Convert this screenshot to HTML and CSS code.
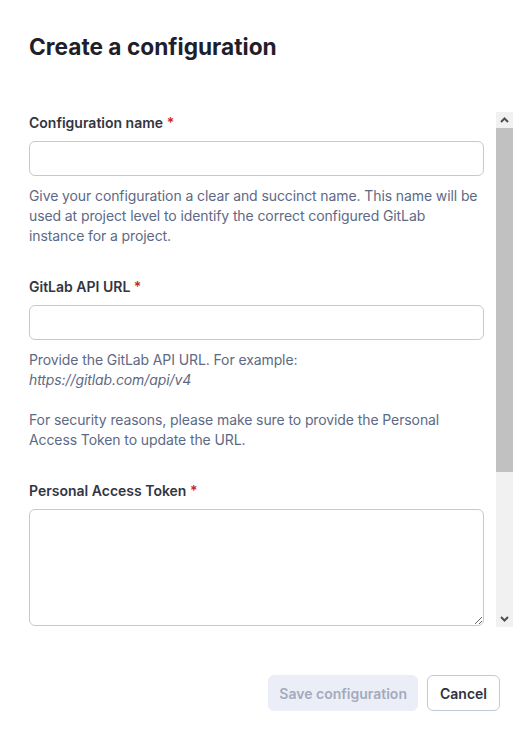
FILE: index.html
```html
<!DOCTYPE html>
<html lang="en">
<head>
<meta charset="utf-8">
<title>Create a configuration</title>
<link rel="stylesheet" href="styles.css">
</head>
<body>
<div class="modal">
  <header class="modal-header">
    <h2 class="modal-title">Create a configuration</h2>
  </header>
  <div class="body-wrap">
    <div class="modal-body">
      <div class="field">
        <label class="label" for="name">Configuration name <span class="req">*</span></label>
        <input class="input" id="name" type="text">
        <p class="help">Give your configuration a clear and succinct name. This name will be used at project level to identify the correct configured GitLab instance for a project.</p>
      </div>
      <div class="field">
        <label class="label" for="url">GitLab API URL <span class="req">*</span></label>
        <input class="input" id="url" type="text">
        <p class="help">Provide the GitLab API URL. For example:<br><em>https://gitlab.com/api/v4</em></p>
        <p class="help help-gap">For security reasons, please make sure to provide the Personal Access Token to update the URL.</p>
      </div>
      <div class="field">
        <label class="label" for="token">Personal Access Token <span class="req">*</span></label>
        <textarea class="textarea" id="token"></textarea>
      </div>
    </div>
    <div class="scrollbar" aria-hidden="true">
      <div class="sb-btn">
        <svg width="9" height="6" viewBox="0 0 9 6"><polyline points="1,5 4.5,1.5 8,5" fill="none" stroke="#505050" stroke-width="2"/></svg>
      </div>
      <div class="sb-thumb"></div>
      <div class="sb-track"></div>
      <div class="sb-btn">
        <svg width="9" height="6" viewBox="0 0 9 6"><polyline points="1,1 4.5,4.5 8,1" fill="none" stroke="#505050" stroke-width="2"/></svg>
      </div>
    </div>
  </div>
  <footer class="modal-footer">
    <button class="btn btn-save" type="button" disabled>Save configuration</button>
    <button class="btn btn-cancel" type="button">Cancel</button>
  </footer>
</div>
</body>
</html>
```

FILE: styles.css
```css
html, body {
  margin: 0;
  padding: 0;
  background: #ffffff;
}

body {
  font-family: Inter, "Noto Sans", "Liberation Sans", sans-serif;
  color: #2f3140;
}

.modal {
  padding: 0 16px 0 13px;
}

.modal-header {
  padding: 33px 16px 0;
  height: 112px;
  box-sizing: border-box;
}

.modal-title {
  margin: 0;
  font-size: 22.7px;
  line-height: 28px;
  font-weight: 700;
  color: #1f1f2b;
}

.body-wrap {
  position: relative;
  height: 515px;
}

.modal-body {
  height: 100%;
  overflow: hidden;
  padding: 1px 29px 0 16px;
  box-sizing: border-box;
}

.scrollbar {
  position: absolute;
  top: 0;
  right: 0;
  bottom: 0;
  width: 17px;
  background: #f1f1f1;
  display: flex;
  flex-direction: column;
}

.sb-btn {
  height: 16px;
  display: flex;
  align-items: center;
  justify-content: center;
}

.sb-thumb {
  height: 344px;
  background: #c1c1c1;
}

.sb-track {
  flex: 1;
}

.field {
  display: flex;
  flex-direction: column;
  margin-bottom: 31px;
}

.label {
  font-size: 14px;
  line-height: 20px;
  font-weight: 600;
  color: #333542;
  margin-bottom: 8px;
}

.req {
  color: #c9281c;
}

.input,
.textarea {
  display: block;
  width: 100%;
  box-sizing: border-box;
  border: 1px solid #c4c9d9;
  border-radius: 6px;
  background: #ffffff;
  font: inherit;
  font-size: 14px;
  margin: 0;
}

.input {
  height: 35px;
  padding: 0 12px;
}

.textarea {
  height: 117px;
  padding: 8px 12px;
  resize: vertical;
}

.help {
  margin: 10px 0 0;
  font-size: 14px;
  line-height: 20px;
  letter-spacing: -0.1px;
  color: #5d6985;
}

.help-gap {
  margin-top: 20px;
}

.modal-footer {
  display: flex;
  justify-content: flex-end;
  gap: 9px;
  padding: 48px 13px 0 16px;
}

.btn {
  height: 36px;
  border-radius: 6px;
  font-family: inherit;
  font-size: 14px;
  font-weight: 600;
  box-sizing: border-box;
  padding: 0 10px;
}

.btn-save {
  background: #eceef7;
  border: 1px solid #eceef7;
  color: #a4aabd;
}

.btn-cancel {
  background: #ffffff;
  border: 1px solid #c4c9d9;
  color: #2f3140;
  padding: 0 12px;
}
```
